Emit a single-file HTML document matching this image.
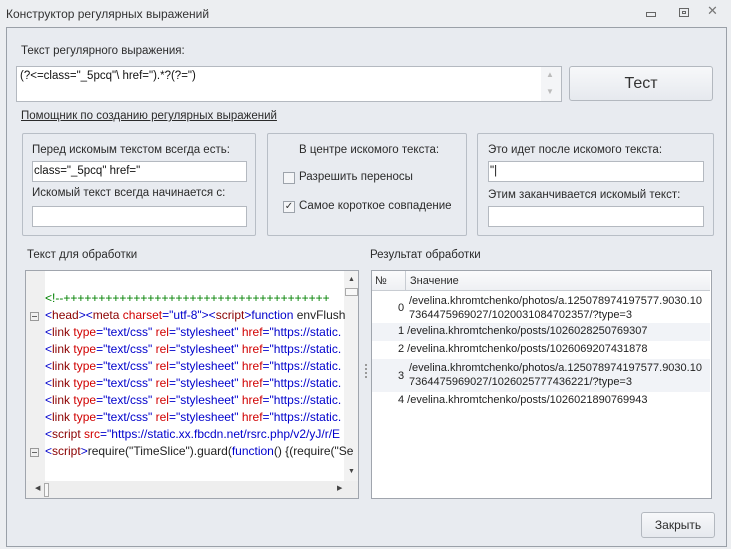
<!DOCTYPE html>
<html><head><meta charset="utf-8"><style>
*{margin:0;padding:0;box-sizing:border-box}
body{width:731px;height:549px;background:#eceef1;font-family:"Liberation Sans","DejaVu Sans",sans-serif;font-size:11.5px;color:#2b2b2b;position:relative;overflow:hidden}
.a{position:absolute}
.frame{left:6px;top:27px;width:721px;height:520px;border:1px solid #9aa0a8;background:#e8ebf0}
.inp{background:#fff;border:1px solid #b4b9c0}
.grp{border:1px solid #b8bec6;border-radius:2px}
.btn{border:1px solid #b3b8bf;border-radius:3px;background:linear-gradient(#f7f8fa,#e6e9ee);text-align:center}
.lbl{white-space:nowrap}
.code{left:45px;white-space:nowrap;font-size:12px;color:#0000cc}
.r{color:#d00000}.k{color:#222}.m{color:#8b0000}
.cb{width:12px;height:12px;border:1px solid #9da3ab;background:#f4f5f7}
.row{left:372px;width:338px;font-size:11px;color:#222;white-space:nowrap}
</style></head><body>
<div class="a lbl" style="left:6px;top:7px;font-size:12px;color:#333">Конструктор регулярных выражений</div>
<div class="a" style="left:646px;top:12px;width:10px;height:5px;border:1px solid #666"></div>
<div class="a" style="left:679px;top:8px;width:10px;height:9px;border:1px solid #666"><div style="margin:2px;width:4px;height:3px;border:1px solid #666"></div></div>
<div class="a" style="left:707px;top:3px;font-size:13px;color:#777">✕</div>
<div class="a frame"></div>

<div class="a lbl" style="left:21px;top:45px">Текст регулярного выражения:</div>
<div class="a inp" style="left:16px;top:66px;width:546px;height:36px"></div>
<div class="a lbl" style="left:20px;top:70px;color:#111">(?&lt;=class="_5pcq"\ href=").*?(?=")</div>
<div class="a" style="left:541px;top:67px;width:20px;height:34px;background:#f4f5f7"></div>
<div class="a" style="left:546px;top:70px;font-size:8px;color:#bbb">▲</div>
<div class="a" style="left:546px;top:87px;font-size:8px;color:#bbb">▼</div>
<div class="a btn" style="left:569px;top:66px;width:144px;height:35px;font-size:16px;line-height:33px;color:#333">Тест</div>
<div class="a lbl" style="left:21px;top:110px;text-decoration:underline">Помощник по созданию регулярных выражений</div>

<div class="a grp" style="left:22px;top:133px;width:234px;height:103px"></div>
<div class="a lbl" style="left:32px;top:144px">Перед искомым текстом всегда есть:</div>
<div class="a inp" style="left:32px;top:161px;width:215px;height:21px"></div>
<div class="a lbl" style="left:34px;top:165px;color:#111">class="_5pcq" href="</div>
<div class="a lbl" style="left:32px;top:187px">Искомый текст всегда начинается с:</div>
<div class="a inp" style="left:32px;top:206px;width:215px;height:21px"></div>

<div class="a grp" style="left:267px;top:133px;width:200px;height:103px"></div>
<div class="a lbl" style="left:299px;top:144px">В центре искомого текста:</div>
<div class="a cb" style="left:283px;top:172px"></div>
<div class="a lbl" style="left:299px;top:171px">Разрешить переносы</div>
<div class="a cb" style="left:283px;top:201px;font-size:10px;line-height:10px;text-align:center;color:#333">✓</div>
<div class="a lbl" style="left:299px;top:200px">Самое короткое совпадение</div>

<div class="a grp" style="left:477px;top:133px;width:237px;height:103px"></div>
<div class="a lbl" style="left:488px;top:144px">Это идет после искомого текста:</div>
<div class="a inp" style="left:488px;top:161px;width:216px;height:21px"></div>
<div class="a lbl" style="left:490px;top:165px;color:#111">"|</div>
<div class="a lbl" style="left:488px;top:189px">Этим заканчивается искомый текст:</div>
<div class="a inp" style="left:488px;top:206px;width:216px;height:21px"></div>

<div class="a lbl" style="left:27px;top:249px">Текст для обработки</div>
<div class="a lbl" style="left:370px;top:249px">Результат обработки</div>

<div class="a" style="left:25px;top:270px;width:334px;height:229px;border:1px solid #a0a5ad;background:#fff;overflow:hidden">
<div class="a" style="left:0;top:0;width:19px;height:210px;background:#f0f0f0"></div>
<div class="a" style="left:318px;top:0;width:15px;height:210px;background:#f2f2f2"></div>
<div class="a" style="left:322px;top:5px;font-size:7px;color:#444">▲</div>
<div class="a" style="left:319px;top:17px;width:13px;height:8px;border:1px solid #aaa;background:#f8f8f8"></div>
<div class="a" style="left:322px;top:197px;font-size:7px;color:#444">▼</div>
<div class="a" style="left:0;top:210px;width:333px;height:18px;background:#eeeeee"></div>
<div class="a" style="left:9px;top:213px;font-size:7px;color:#444">◀</div>
<div class="a" style="left:18px;top:212px;width:5px;height:14px;border:1px solid #aaa;background:#f8f8f8"></div>
<div class="a" style="left:311px;top:213px;font-size:7px;color:#444">▶</div>
<div class="a" style="left:4px;top:41px;width:9px;height:9px;border:1px solid #999"><div style="margin:3px 1px;height:1px;background:#666"></div></div>
<div class="a" style="left:4px;top:177px;width:9px;height:9px;border:1px solid #999"><div style="margin:3px 1px;height:1px;background:#666"></div></div>
</div>
<div class="a code" style="top:291px;color:#008000">&lt;!--++++++++++++++++++++++++++++++++++++++</div>
<div class="a code" style="top:308px">&lt;<span class="m">head</span>&gt;&lt;<span class="m">meta</span> <span class="r">charset</span>="utf-8"&gt;&lt;<span class="m">script</span>&gt;function <span class="k">envFlush</span></div>
<div class="a code" style="top:325px">&lt;<span class="m">link</span> <span class="r">type</span>="text/css" <span class="r">rel</span>="stylesheet" <span class="r">href</span>="https://static.</div>
<div class="a code" style="top:342px">&lt;<span class="m">link</span> <span class="r">type</span>="text/css" <span class="r">rel</span>="stylesheet" <span class="r">href</span>="https://static.</div>
<div class="a code" style="top:359px">&lt;<span class="m">link</span> <span class="r">type</span>="text/css" <span class="r">rel</span>="stylesheet" <span class="r">href</span>="https://static.</div>
<div class="a code" style="top:376px">&lt;<span class="m">link</span> <span class="r">type</span>="text/css" <span class="r">rel</span>="stylesheet" <span class="r">href</span>="https://static.</div>
<div class="a code" style="top:393px">&lt;<span class="m">link</span> <span class="r">type</span>="text/css" <span class="r">rel</span>="stylesheet" <span class="r">href</span>="https://static.</div>
<div class="a code" style="top:410px">&lt;<span class="m">link</span> <span class="r">type</span>="text/css" <span class="r">rel</span>="stylesheet" <span class="r">href</span>="https://static.</div>
<div class="a code" style="top:427px">&lt;<span class="m">script</span> <span class="r">src</span>="https://static.xx.fbcdn.net/rsrc.php/v2/yJ/r/E</div>
<div class="a code" style="top:444px">&lt;<span class="m">script</span>&gt;<span class="k">require("TimeSlice").guard(</span>function<span class="k">() {(require("Se</span></div>

<div class="a" style="left:365px;top:364px;width:2px;height:14px;background:repeating-linear-gradient(#999 0 2px,transparent 2px 4px)"></div>

<div class="a" style="left:371px;top:270px;width:341px;height:229px;border:1px solid #a0a5ad;background:#fff"></div>
<div class="a" style="left:372px;top:271px;width:338px;height:20px;background:linear-gradient(#fbfbfc,#eef0f3);border-bottom:1px solid #c8ccd2"></div>
<div class="a" style="left:405px;top:271px;width:1px;height:20px;background:#c8ccd2"></div>
<div class="a lbl" style="left:375px;top:275px;font-size:11px">№</div>
<div class="a lbl" style="left:410px;top:275px;font-size:11px">Значение</div>
<div class="a row" style="top:292px;height:31px"><span class="a" style="left:26px;top:10px">0</span><span class="a" style="left:37px;top:2px;line-height:14px">/evelina.khromtchenko/photos/a.125078974197577.9030.10<br>7364475969027/1020031084702357/?type=3</span></div>
<div class="a row" style="top:323px;height:18px;background:#f1f3f7"><span class="a" style="left:26px;top:2px">1 /evelina.khromtchenko/posts/1026028250769307</span></div>
<div class="a row" style="top:341px;height:18px"><span class="a" style="left:26px;top:2px">2 /evelina.khromtchenko/posts/1026069207431878</span></div>
<div class="a row" style="top:359px;height:33px;background:#f1f3f7"><span class="a" style="left:26px;top:11px">3</span><span class="a" style="left:37px;top:2px;line-height:14px">/evelina.khromtchenko/photos/a.125078974197577.9030.10<br>7364475969027/1026025777436221/?type=3</span></div>
<div class="a row" style="top:392px;height:18px"><span class="a" style="left:26px;top:2px">4 /evelina.khromtchenko/posts/1026021890769943</span></div>

<div class="a btn" style="left:641px;top:512px;width:74px;height:26px;line-height:24px;font-size:12px">Закрыть</div>
</body></html>
